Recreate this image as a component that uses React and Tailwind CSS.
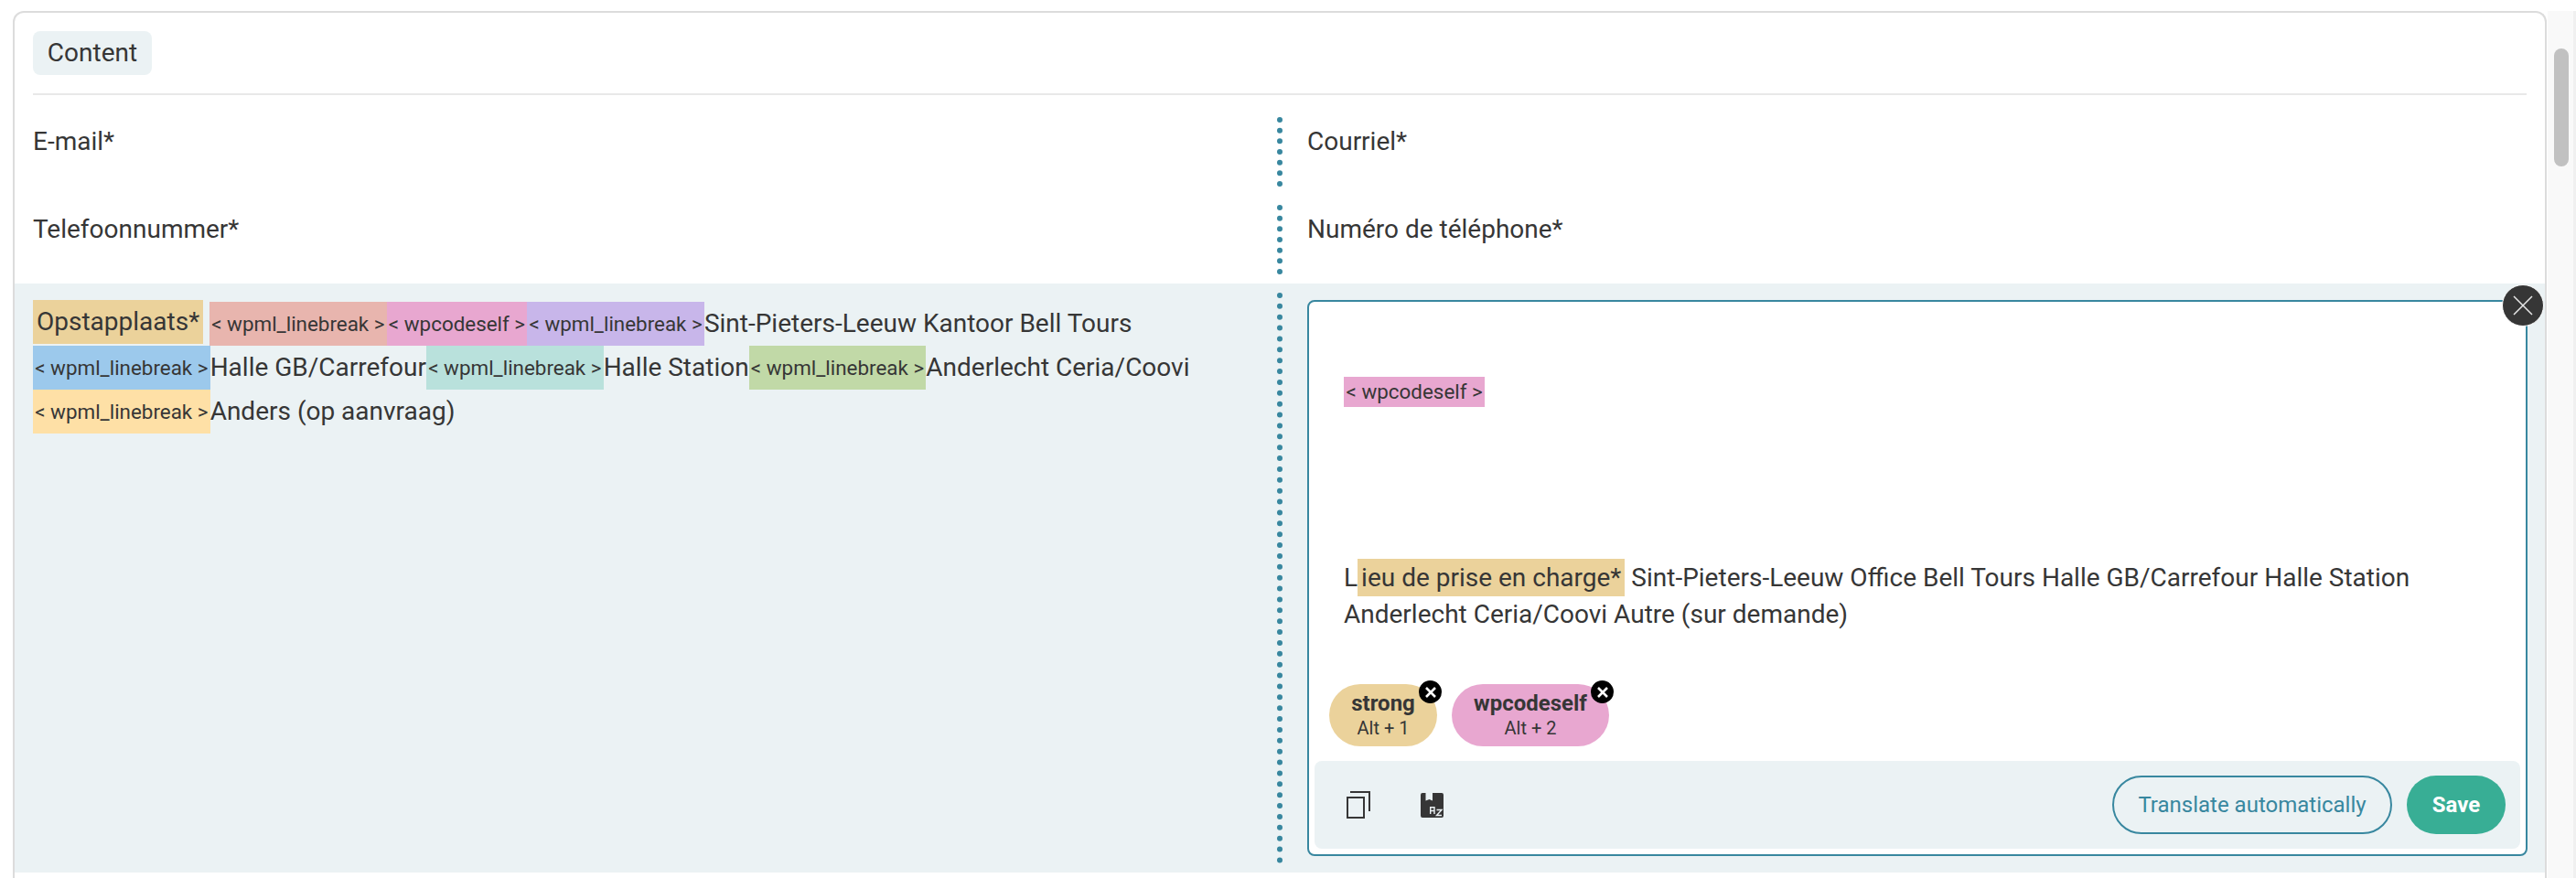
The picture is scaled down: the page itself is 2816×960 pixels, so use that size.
const font = { fontFamily: 'Roboto, sans-serif' };

function Tag({ bg, children }) {
  return <span className={`${bg} inline-block h-[48px] px-[2.2px] align-top text-[22.4px] leading-[48px] whitespace-nowrap`}>{children}</span>;
}

function Chip({ bg, title, keys, w }) {
  return (
    <div className={`${bg} ${w} relative flex h-[68px] flex-col items-center justify-center rounded-full`}>
      <span className="text-[24px] leading-[28px] font-bold">{title}</span>
      <span className="text-[20px] leading-[26px]">{keys}</span>
      <span className="absolute top-[-4px] right-[-5px] flex h-[25px] w-[25px] items-center justify-center rounded-full bg-black">
        <svg width="14" height="14" viewBox="0 0 14 14"><path d="M2 2 12 12M12 2 2 12" stroke="#fff" strokeWidth="2.6" /></svg>
      </span>
    </div>
  );
}

function Dots({ h }) {
  return <div className={`${h} w-0 shrink-0 border-l-[6px] border-dotted border-[#38879f]`} />;
}

function Row({ left, right }) {
  return (
    <div className="flex h-[96px] py-[10px] text-[28px] leading-[48px]">
      <div className="w-[1380px] pt-[3px] pl-[20px]">{left}</div>
      <Dots h="h-[76px]" />
      <div className="pt-[3px] pl-[27px]">{right}</div>
    </div>
  );
}

export default function App() {
  return (
    <div className="flex h-[960px] w-[2816px] overflow-hidden bg-white text-[#363636]" style={font}>
      <div className="flex-1 pt-[12px] pr-[1px] pl-[14px]">
        <div className="h-[948px] rounded-t-[12px] border-x-[2px] border-t-[2px] border-[#dcdcdc]">
          <div className="px-[20px] pt-[20px]">
            <span className="block h-[48px] w-[130px] rounded-[8px] bg-[#ebf2f4] text-center text-[28px] leading-[48px]">Content</span>
            <div className="mt-[20px] h-[2px] bg-[#e8e8e8]" />
          </div>
          <div className="pt-[14px]">
            <Row left="E-mail*" right="Courriel*" />
            <Row left="Telefoonnummer*" right="Numéro de téléphone*" />
          </div>
          <div className="flex h-[644px] bg-[#ebf2f4]">
            <div className="w-[1380px] pt-[20px] pr-[40px] pl-[20px] text-[28px] leading-[48px]">
              <span className="relative top-[-2px] mr-[7px] inline-block h-[48px] w-[186px] bg-[#ebd29b] pl-[4px] align-top whitespace-nowrap">Opstapplaats*</span>
              <Tag bg="bg-[#e8b5ae]">&lt; wpml_linebreak &gt;</Tag>
              <Tag bg="bg-[#e8a7d0]">&lt; wpcodeself &gt;</Tag>
              <Tag bg="bg-[#c8b6ea]">&lt; wpml_linebreak &gt;</Tag>
              Sint-Pieters-Leeuw Kantoor Bell Tours
              <br />
              <Tag bg="bg-[#9cc9ec]">&lt; wpml_linebreak &gt;</Tag>
              Halle GB/Carrefour
              <Tag bg="bg-[#b9e1dc]">&lt; wpml_linebreak &gt;</Tag>
              Halle Station
              <Tag bg="bg-[#c1d9a7]">&lt; wpml_linebreak &gt;</Tag>
              Anderlecht Ceria/Coovi
              <br />
              <Tag bg="bg-[#fee0a6]">&lt; wpml_linebreak &gt;</Tag>
              Anders (op aanvraag)
            </div>
            <Dots h="mt-[10px] h-[624px]" />
            <div className="relative mt-[18px] ml-[27px] flex h-[608px] w-[1334px] flex-col rounded-[8px] border-[2px] border-[#38879f] bg-white">
              <div className="flex-1 px-[38px] text-[28px] leading-[40px]">
                <div className="mt-[82px]"><span className="inline-block h-[33px] bg-[#e8a7d0] px-[2.5px] align-top text-[22.4px] leading-[33px]">&lt; wpcodeself &gt;</span></div>
                <div className="mt-[160px]">L<span className="bg-[#ebd29b] px-[4px] py-[4px]">ieu de prise en charge*</span> Sint-Pieters-Leeuw Office Bell Tours Halle GB/Carrefour Halle Station Anderlecht Ceria/Coovi Autre (sur demande)</div>
              </div>
              <div className="flex gap-[16px] pb-[16px] pl-[22px]">
                <Chip bg="bg-[#ebd29b]" title="strong" keys="Alt + 1" w="w-[118px]" />
                <Chip bg="bg-[#e8a7d0]" title="wpcodeself" keys="Alt + 2" w="w-[172px]" />
              </div>
              <div className="mx-[6px] mb-[6px] flex h-[96px] items-center rounded-[8px] bg-[#ebf2f4] pr-[16px] pl-[35px]">
                <svg width="26" height="30" viewBox="0 0 26 30" fill="none" stroke="#363636" strokeWidth="2">
                  <rect x="1" y="7" width="18" height="22" />
                  <path d="M4 1H25V22" />
                </svg>
                <svg className="ml-[55px]" width="25" height="27" viewBox="0 0 25 27">
                  <path d="M2 0H5.500V8.500L9.500 7 13 8.500V0H23A2 2 0 0 1 25 2V25A2 2 0 0 1 23 27H2A2 2 0 0 1 0 25V2A2 2 0 0 1 2 0Z" fill="#363636" />
                  <path d="M10.700 23V15.700H15V23M10.700 19.500H15M17.500 18.500H23L17.500 24.500H23" fill="none" stroke="#ebf2f4" strokeWidth="1.400" />
                </svg>
                <button className="ml-auto h-[64px] w-[306px] rounded-full border-[2px] border-[#38879f] text-[24px] text-[#38879f]">Translate automatically</button>
                <button className="ml-[16px] h-[64px] w-[108px] rounded-full bg-[#38ae95] text-[24px] font-bold text-white">Save</button>
              </div>
              <span className="absolute top-[-19px] right-[-20px] flex h-[46px] w-[46px] items-center justify-center rounded-full border-[1px] border-white bg-[#363636]">
                <svg width="22" height="22" viewBox="0 0 22 22"><path d="M1 1 21 21M21 1 1 21" stroke="#e8e8e8" strokeWidth="1.500" /></svg>
              </span>
            </div>
          </div>
        </div>
      </div>
      <div className="mt-[12px] w-[31px] border-r-[3px] border-[#f0f0f0] bg-[#f9f9f9] pt-[41px] pl-[7px]">
        <div className="h-[129px] w-[16px] rounded-full bg-[#c1c1c1]" />
      </div>
    </div>
  );
}
